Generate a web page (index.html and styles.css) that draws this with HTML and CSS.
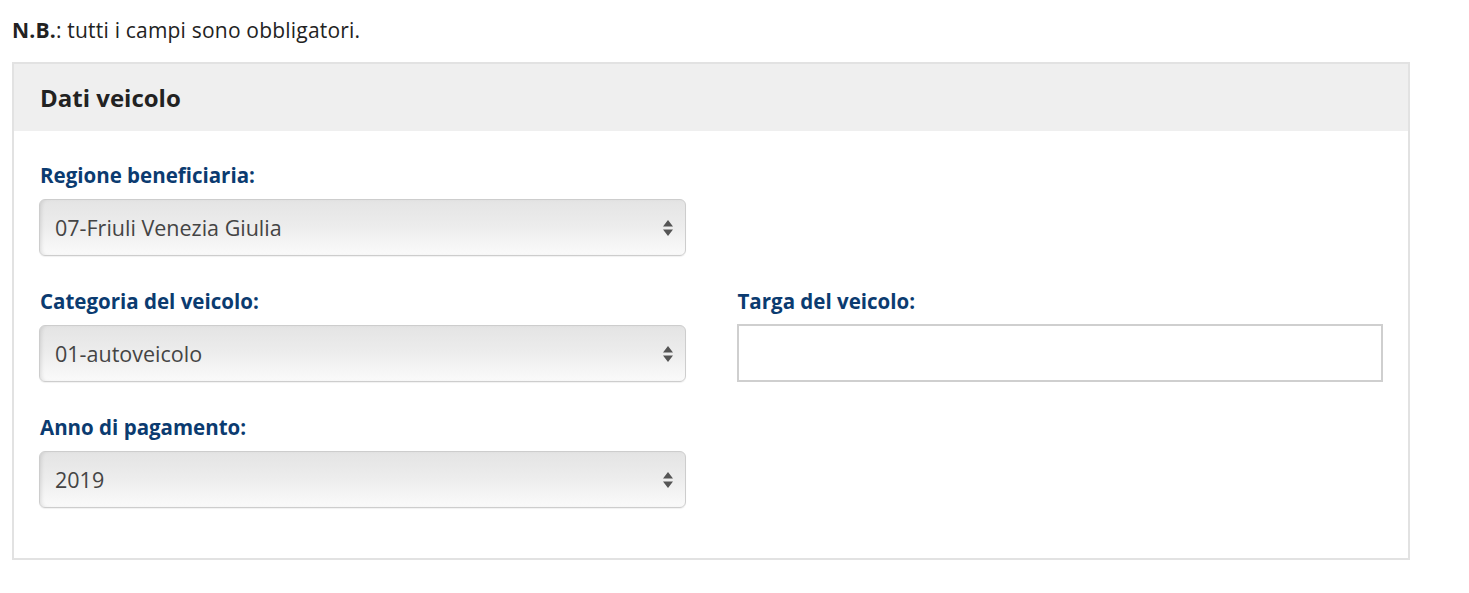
FILE: index.html
```html
<!DOCTYPE html>
<html>
<head>
  <title>Dati veicolo</title>
  <link rel="stylesheet" href="styles.css">
</head>
<body>
  <div class="page">
    <p class="note"><strong>N.B.</strong>: tutti i campi sono obbligatori.</p>

    <div class="panel">
      <div class="panel-head">
        <h2>Dati veicolo</h2>
      </div>
      <div class="panel-body">
        <div class="field">
          <label for="regione">Regione beneficiaria:</label>
          <div class="select-wrap">
            <select id="regione">
              <option>07-Friuli Venezia Giulia</option>
            </select>
            <svg class="arrows" width="10" height="16" viewBox="0 0 10 16"><path d="M5 0 L10 6.5 L0 6.5 Z M0 9.5 L10 9.5 L5 16 Z" fill="#555"/></svg>
          </div>
        </div>
        <div class="field"></div>

        <div class="field">
          <label for="categoria">Categoria del veicolo:</label>
          <div class="select-wrap">
            <select id="categoria">
              <option>01-autoveicolo</option>
            </select>
            <svg class="arrows" width="10" height="16" viewBox="0 0 10 16"><path d="M5 0 L10 6.5 L0 6.5 Z M0 9.5 L10 9.5 L5 16 Z" fill="#555"/></svg>
          </div>
        </div>
        <div class="field">
          <label for="targa">Targa del veicolo:</label>
          <input type="text" id="targa">
        </div>

        <div class="field">
          <label for="anno">Anno di pagamento:</label>
          <div class="select-wrap">
            <select id="anno">
              <option>2019</option>
            </select>
            <svg class="arrows" width="10" height="16" viewBox="0 0 10 16"><path d="M5 0 L10 6.5 L0 6.5 Z M0 9.5 L10 9.5 L5 16 Z" fill="#555"/></svg>
          </div>
        </div>
      </div>
    </div>
  </div>
</body>
</html>
```

FILE: styles.css
```css
body {
  margin: 0;
  font-family: "Open Sans", Lato, sans-serif;
  color: #222;
  background: #fff;
}

.page {
  width: 1398px;
  padding: 0 12px;
}

.note {
  margin: 0;
  padding-top: 17px;
  height: 62px;
  box-sizing: border-box;
  font-size: 21px;
  line-height: 26px;
  letter-spacing: 0.2px;
}

.note strong {
  font-weight: 700;
}

.panel {
  border: 2px solid #e2e2e2;
}

.panel-head {
  background-color: #efefef;
  height: 67px;
  padding: 0 26px;
  display: flex;
  align-items: center;
}

.panel-head h2 {
  margin: 0;
  font-size: 24px;
  font-weight: 700;
  color: #222;
}

.panel-body {
  display: grid;
  grid-template-columns: 1fr 1fr;
  column-gap: 51px;
  row-gap: 32px;
  padding: 31px 25px 50px;
}

.field label {
  display: block;
  font-size: 20.5px;
  font-weight: 700;
  line-height: 26px;
  color: #0b3b70;
  margin-bottom: 11px;
  padding-left: 1px;
}

.select-wrap {
  position: relative;
}

.select-wrap select {
  appearance: none;
  -webkit-appearance: none;
  display: block;
  width: 100%;
  height: 57px;
  padding: 0 40px 0 15px;
  font-family: inherit;
  font-size: 21.5px;
  color: #444;
  border: 1px solid #cdcdcd;
  border-radius: 6px;
  background: linear-gradient(to bottom, #e4e4e4 0%, #ececec 45%, #fafafa 100%);
  box-shadow: inset 3px 0 4px -2px rgba(0, 0, 0, 0.12), 0 1px 1px rgba(0, 0, 0, 0.06);
}

.select-wrap .arrows {
  position: absolute;
  right: 13px;
  top: 21px;
  pointer-events: none;
}

.field input[type="text"] {
  display: block;
  width: 100%;
  height: 58px;
  box-sizing: border-box;
  border: 2px solid #cfcfcf;
  font-family: inherit;
  font-size: 21.5px;
  padding: 0 15px;
  margin-top: -1px;
}
```
